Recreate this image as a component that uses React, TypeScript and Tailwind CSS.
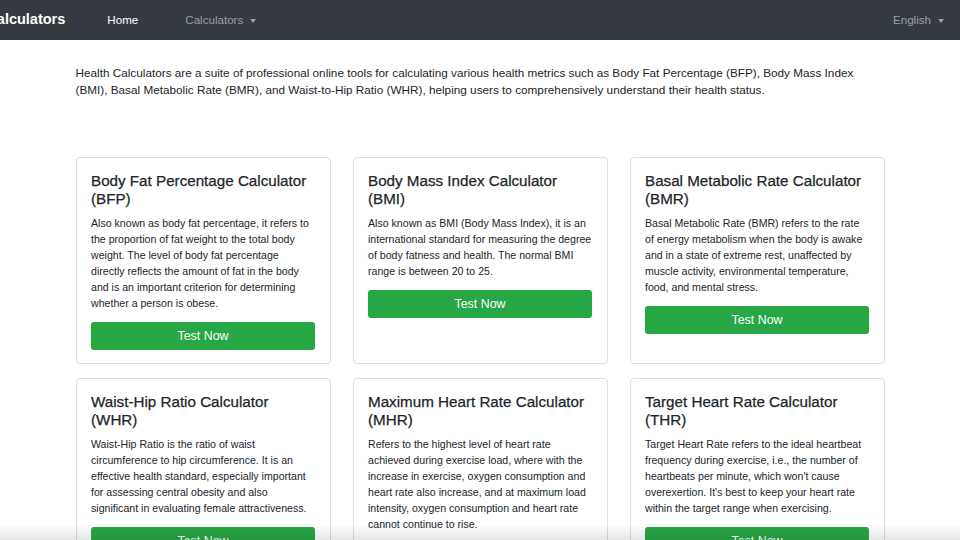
import { ReactNode } from 'react'

interface Calculator {
  title: string
  abbr: string
  text: string
}

const calculators: Calculator[] = [
  {
    title: 'Body Fat Percentage Calculator',
    abbr: 'BFP',
    text: 'Also known as body fat percentage, it refers to the proportion of fat weight to the total body weight. The level of body fat percentage directly reflects the amount of fat in the body and is an important criterion for determining whether a person is obese.',
  },
  {
    title: 'Body Mass Index Calculator',
    abbr: 'BMI',
    text: 'Also known as BMI (Body Mass Index), it is an international standard for measuring the degree of body fatness and health. The normal BMI range is between 20 to 25.',
  },
  {
    title: 'Basal Metabolic Rate Calculator',
    abbr: 'BMR',
    text: 'Basal Metabolic Rate (BMR) refers to the rate of energy metabolism when the body is awake and in a state of extreme rest, unaffected by muscle activity, environmental temperature, food, and mental stress.',
  },
  {
    title: 'Waist-Hip Ratio Calculator',
    abbr: 'WHR',
    text: 'Waist-Hip Ratio is the ratio of waist circumference to hip circumference. It is an effective health standard, especially important for assessing central obesity and also significant in evaluating female attractiveness.',
  },
  {
    title: 'Maximum Heart Rate Calculator',
    abbr: 'MHR',
    text: 'Refers to the highest level of heart rate achieved during exercise load, where with the increase in exercise, oxygen consumption and heart rate also increase, and at maximum load intensity, oxygen consumption and heart rate cannot continue to rise.',
  },
  {
    title: 'Target Heart Rate Calculator',
    abbr: 'THR',
    text: "Target Heart Rate refers to the ideal heartbeat frequency during exercise, i.e., the number of heartbeats per minute, which won't cause overexertion. It's best to keep your heart rate within the target range when exercising.",
  },
]

function Caret() {
  return (
    <span className="ml-[7px] inline-block h-0 w-0 border-x-[3.5px] border-t-[4px] border-x-transparent border-t-current align-middle" />
  )
}

function NavLink({ children, active }: { children: ReactNode; active?: boolean }) {
  return (
    <a className={active ? 'text-white' : 'text-[#9b9ea2]'} href="#">
      {children}
    </a>
  )
}

function CalculatorCard({ item }: { item: Calculator }) {
  return (
    <div className="rounded-[4px] border border-[#dedede] bg-white px-[14.5px] pt-[14px] pb-[13px]">
      <h4 className="mb-[7px] text-[15.2px] leading-[18px] text-[#212529] [-webkit-text-stroke:0.25px_#212529]">
        {item.title} ({item.abbr})
      </h4>
      <p className="text-[10.6px] leading-[16px] text-[#212529]">{item.text}</p>
      <button className="mt-[11px] h-[28px] w-full rounded-[3px] bg-[#28a745] text-[12.4px] text-white">
        Test Now
      </button>
    </div>
  )
}

export default function App() {
  return (
    <div className="relative min-h-screen overflow-hidden bg-white font-['Liberation_Sans',Arial,sans-serif]">
      {/* Navbar */}
      <nav className="flex h-10 items-center bg-[#343a40] text-[11.6px]">
        <span className="-ml-[62px] mr-[42px] whitespace-nowrap text-[14.5px] font-bold text-white">
          Health Calculators
        </span>
        <div className="flex items-center gap-[47px]">
          <NavLink active>Home</NavLink>
          <NavLink>
            Calculators
            <Caret />
          </NavLink>
        </div>
        <div className="ml-auto mr-[16px]">
          <NavLink>
            English
            <Caret />
          </NavLink>
        </div>
      </nav>

      <main className="mx-auto w-[809px] pt-[24px]">
        <p className="text-[11.75px] leading-[17px] text-[#212529]">
          Health Calculators are a suite of professional online tools for calculating various health metrics such as Body
          Fat Percentage (BFP), Body Mass Index (BMI), Basal Metabolic Rate (BMR), and Waist-to-Hip Ratio (WHR), helping
          users to comprehensively understand their health status.
        </p>

        <div className="mt-[59px] grid grid-cols-3 gap-x-[22px] gap-y-[14px]">
          {calculators.map((item) => (
            <CalculatorCard key={item.abbr} item={item} />
          ))}
        </div>
      </main>

      <div className="pointer-events-none fixed inset-x-0 bottom-0 h-[16px] bg-gradient-to-b from-transparent to-black/10" />
    </div>
  )
}
